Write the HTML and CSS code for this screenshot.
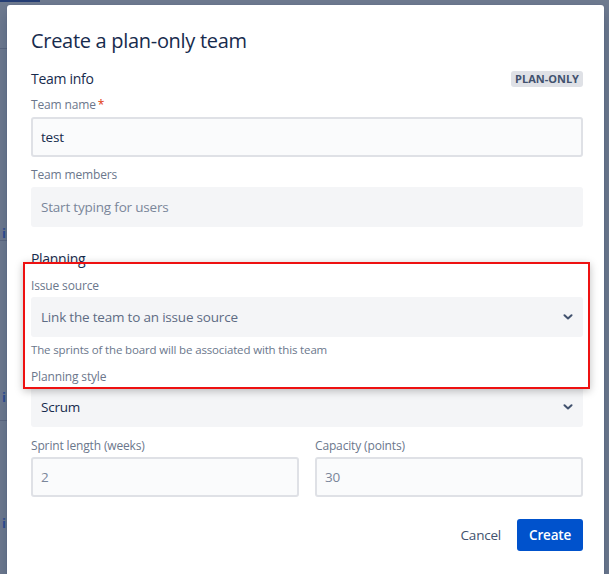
FILE: index.html
```html
<!DOCTYPE html>
<html>
<head>
<meta charset="utf-8">
<link rel="stylesheet" href="styles.css">
</head>
<body>
<div class="backdrop">
  <div class="bg-strip">
    <span class="bg-top"></span>
    <span class="bg-line l1"></span>
    <span class="bg-i i1">i</span>
    <span class="bg-line l2"></span>
    <span class="bg-i i2">i</span>
    <span class="bg-line l3"></span>
    <span class="bg-i i3">i</span>
  </div>
  <div class="modal">
    <h1 class="title">Create a plan-only team</h1>
    <div class="section-head">
      <span class="section-title">Team info</span>
      <span class="badge">PLAN-ONLY</span>
    </div>
    <div class="label first">Team name<span class="req">*</span></div>
    <div class="input bordered"><span class="val">test</span></div>
    <div class="label">Team members</div>
    <div class="input filled"><span class="ph">Start typing for users</span></div>

    <div class="section-title planning">Planning</div>
    <div class="label source">Issue source</div>
    <div class="input filled select"><span class="sel-ph">Link the team to an issue source</span>
      <svg class="chev" width="10" height="6" viewBox="0 0 10 6"><path d="M1.5 1.2 L5 4.5 L8.5 1.2" fill="none" stroke="#42526e" stroke-width="2" stroke-linecap="round" stroke-linejoin="round"/></svg>
    </div>
    <div class="helper">The sprints of the board will be associated with this team</div>
    <div class="label style">Planning style</div>
    <div class="input filled select"><span class="val">Scrum</span>
      <svg class="chev" width="10" height="6" viewBox="0 0 10 6"><path d="M1.5 1.2 L5 4.5 L8.5 1.2" fill="none" stroke="#42526e" stroke-width="2" stroke-linecap="round" stroke-linejoin="round"/></svg>
    </div>
    <div class="cols">
      <div class="col">
        <div class="label">Sprint length (weeks)</div>
        <div class="input bordered"><span class="num">2</span></div>
      </div>
      <div class="col">
        <div class="label">Capacity (points)</div>
        <div class="input bordered"><span class="num">30</span></div>
      </div>
    </div>
    <div class="footer">
      <button class="btn cancel">Cancel</button>
      <button class="btn primary">Create</button>
    </div>
  </div>
  <div class="highlight"></div>
</div>
</body>
</html>
```
FILE: styles.css
```css
html, body {
  margin: 0;
  padding: 0;
  height: 100%;
  overflow: hidden;
}
body {
  background: #6f7b90;
  font-family: "Open Sans", "Noto Sans", "Liberation Sans", sans-serif;
  color: #172b4d;
}
.backdrop {
  position: relative;
  height: 574px;
}
.bg-strip {
  position: absolute;
  left: 0;
  top: 0;
  width: 7px;
  height: 574px;
}
.bg-top {
  position: absolute;
  left: 0;
  top: 0;
  width: 40px;
  height: 2px;
  background: #253e75;
}
.bg-line {
  position: absolute;
  left: 0;
  width: 7px;
  height: 1px;
  background: #5d6880;
}
.l1 { top: 48px; }
.l2 { top: 240px; }
.l3 { top: 420px; }
.bg-i {
  position: absolute;
  left: 2px;
  font-size: 13px;
  font-weight: bold;
  color: #2f4f96;
  line-height: 14px;
}
.i1 { top: 226px; }
.i2 { top: 390px; }
.i3 { top: 516px; }
.modal {
  position: absolute;
  left: 7px;
  top: 5px;
  width: 552px;
  height: 620px;
  padding: 24px 21px 0 24px;
  background: #fff;
  border-radius: 3px;
  box-shadow: 0 0 1px rgba(9,30,66,0.3), 0 8px 16px rgba(9,30,66,0.25);
}
.title {
  margin: 0;
  font-size: 20px;
  line-height: 24px;
  font-weight: 400;
  color: #172b4d;
  letter-spacing: -0.3px;
}
.section-head {
  margin-top: 16px;
  height: 20px;
  display: flex;
  align-items: center;
  justify-content: space-between;
}
.section-title {
  font-size: 14px;
  line-height: 20px;
  font-weight: 500;
  color: #172b4d;
  letter-spacing: -0.3px;
}
.badge {
  background: #dfe1e6;
  color: #42526e;
  font-size: 11px;
  font-weight: 700;
  line-height: 16px;
  padding: 0 4px;
  border-radius: 3px;
}
.label {
  font-size: 12px;
  line-height: 16px;
  font-weight: 500;
  color: #6b778c;
  margin-top: 10px;
  margin-bottom: 4px;
  letter-spacing: -0.15px;
}
.label.first { margin-top: 8px; }
.req { color: #de350b; margin-left: 2px; }
.input {
  box-sizing: border-box;
  height: 40px;
  border-radius: 3px;
  display: flex;
  align-items: center;
  font-size: 13.5px;
  letter-spacing: -0.2px;
}
.input.bordered {
  background: #fafbfc;
  border: 2px solid #dfe1e6;
  padding: 0 8px;
}
.input.filled {
  background: #f4f5f7;
  padding: 0 10px;
}
.val { color: #172b4d; }
.ph { color: #7a869a; }
.sel-ph { color: #5e6c84; }
.num { color: #7a869a; }
.select { justify-content: space-between; padding-right: 12px; }
.chev { display: block; }
.planning { margin-top: 22px; }
.label.source { margin-top: 9px; margin-bottom: 3px; }
.helper {
  font-size: 11.5px;
  line-height: 16px;
  color: #6b778c;
  margin-top: 5px;
  letter-spacing: -0.15px;
}
.label.style { margin-top: 11px; margin-bottom: 2px; }
.cols {
  display: grid;
  grid-template-columns: 1fr 1fr;
  column-gap: 16px;
  margin-top: 11px;
}
.cols .label { margin-top: 0; margin-bottom: 3px; }
.footer {
  margin-top: 22px;
  display: flex;
  justify-content: flex-end;
  gap: 4px;
}
.btn {
  font-family: inherit;
  font-size: 13.5px;
  letter-spacing: -0.2px;
  height: 32px;
  line-height: 32px;
  border: 0;
  border-radius: 3px;
  padding: 0 12px;
  cursor: pointer;
}
.cancel {
  background: transparent;
  color: #42526e;
}
.primary {
  background: #0052cc;
  color: #fff;
  font-weight: 600;
}
.highlight {
  position: absolute;
  left: 23px;
  top: 262px;
  width: 563px;
  height: 123px;
  border: 2px solid #ee1111;
  box-shadow: 0 2px 8px rgba(0,0,0,0.25);
  pointer-events: none;
}
```
